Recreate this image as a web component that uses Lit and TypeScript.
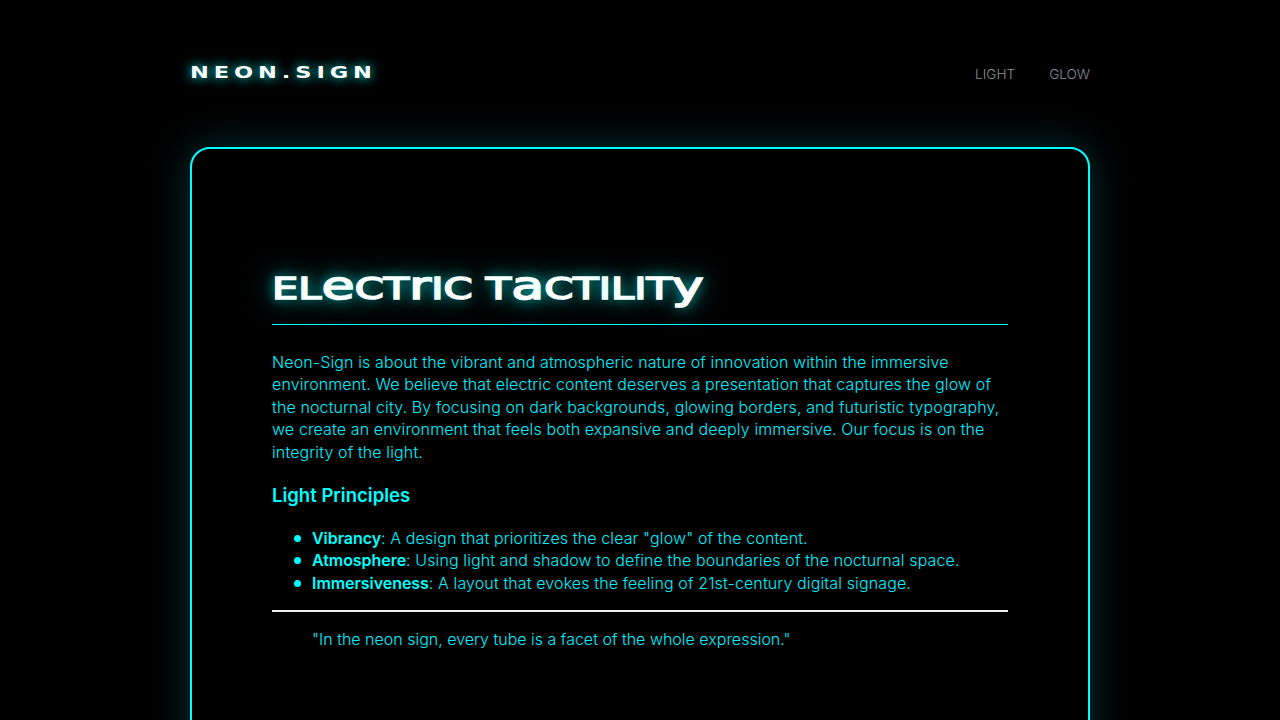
import { LitElement, html, css } from "lit";
import { customElement } from "lit/decorators.js";

const title = "Electric Tactility";
const lower = new Set(["e", "r", "a", "y"]);

@customElement("app-root")
export class AppRoot extends LitElement {
  static styles = css`
    :host { display: block; background: #000; color: #00f0ff; font-family: "Inter", "Liberation Sans", sans-serif; height: 720px; overflow: hidden; }
    .page { width: 900px; margin: 0 auto; padding: 48px 0 0; }
    header { display: flex; justify-content: space-between; align-items: flex-start; height: 99px; }
    .logo { display: block; transform-origin: left top; transform: scaleX(1.404); margin-top: 15px; font: 700 16px/20px "DejaVu Sans", sans-serif; letter-spacing: 0.22em; color: #fff; text-shadow: 0 0 10px #00ffff; white-space: nowrap; }
    nav { display: flex; gap: 34px; margin-top: 18px; font: 300 13.6px/16px "Inter", sans-serif; color: #8a8f94; }
    .card { border: 2px solid #00ffff; border-radius: 20px; padding: 80px 80px 140px; background: #000; box-shadow: 0 0 40px rgba(0,255,255,.2); }
    h1 { margin: 42px 0 26px; padding-bottom: 17px; border-bottom: 1px solid #00ffff; font: 400 30px/36px "DejaVu Sans", sans-serif; color: #fff; white-space: nowrap; }
    h1 .t { display: inline-block; transform-origin: left center; transform: scaleX(1.385); -webkit-text-stroke: 1.6px #fff; text-shadow: 0 0 10px rgba(0,255,255,.7), 0 0 22px rgba(0,255,255,.8); }
    h1 .lc { font-size: 1.3em; line-height: 0; }
    p { margin: 0; font-size: 16px; font-weight: 300; line-height: 22.4px; letter-spacing: 0.12px; }
    h2 { margin: 20px 0 20px; font-size: 18.5px; line-height: 24px; font-weight: 600; color: #00ffff; }
    ul { margin: 0; padding: 0 0 0 40px; list-style: none; font-size: 16px; font-weight: 300; line-height: 22.4px; letter-spacing: 0.12px; }
    li { position: relative; }
    li::before { content: ""; position: absolute; left: -18px; top: 8px; width: 7px; height: 7px; border-radius: 50%; background: #00ffff; }
    strong { font-weight: 600; color: #00ffff; letter-spacing: -0.05px; }
    hr { border: 0; height: 2px; background: #eee; margin: 16px 0 16px; }
    blockquote { margin: 0 0 0 40px; font-size: 16px; font-weight: 300; line-height: 22.4px; }
  `;

  render() {
    return html`<div class="page">
      <header>
        <span class="logo">NEON.SIGN</span>
        <nav><span>LIGHT</span><span>GLOW</span></nav>
      </header>
      <main class="card">
        <h1><span class="t">${[...title].map((c) => lower.has(c) ? html`<span class="lc">${c}</span>` : c.toUpperCase())}</span></h1>
        <p>Neon-Sign is about the vibrant and atmospheric nature of innovation within the immersive environment. We believe that electric content deserves a presentation that captures the glow of the nocturnal city. By focusing on dark backgrounds, glowing borders, and futuristic typography, we create an environment that feels both expansive and deeply immersive. Our focus is on the integrity of the light.</p>
        <h2>Light Principles</h2>
        <ul>
          <li><strong>Vibrancy</strong>: A design that prioritizes the clear "glow" of the content.</li>
          <li><strong>Atmosphere</strong>: Using light and shadow to define the boundaries of the nocturnal space.</li>
          <li><strong>Immersiveness</strong>: A layout that evokes the feeling of 21st-century digital signage.</li>
        </ul>
        <hr />
        <blockquote>"In the neon sign, every tube is a facet of the whole expression."</blockquote>
      </main>
    </div>`;
  }
}
